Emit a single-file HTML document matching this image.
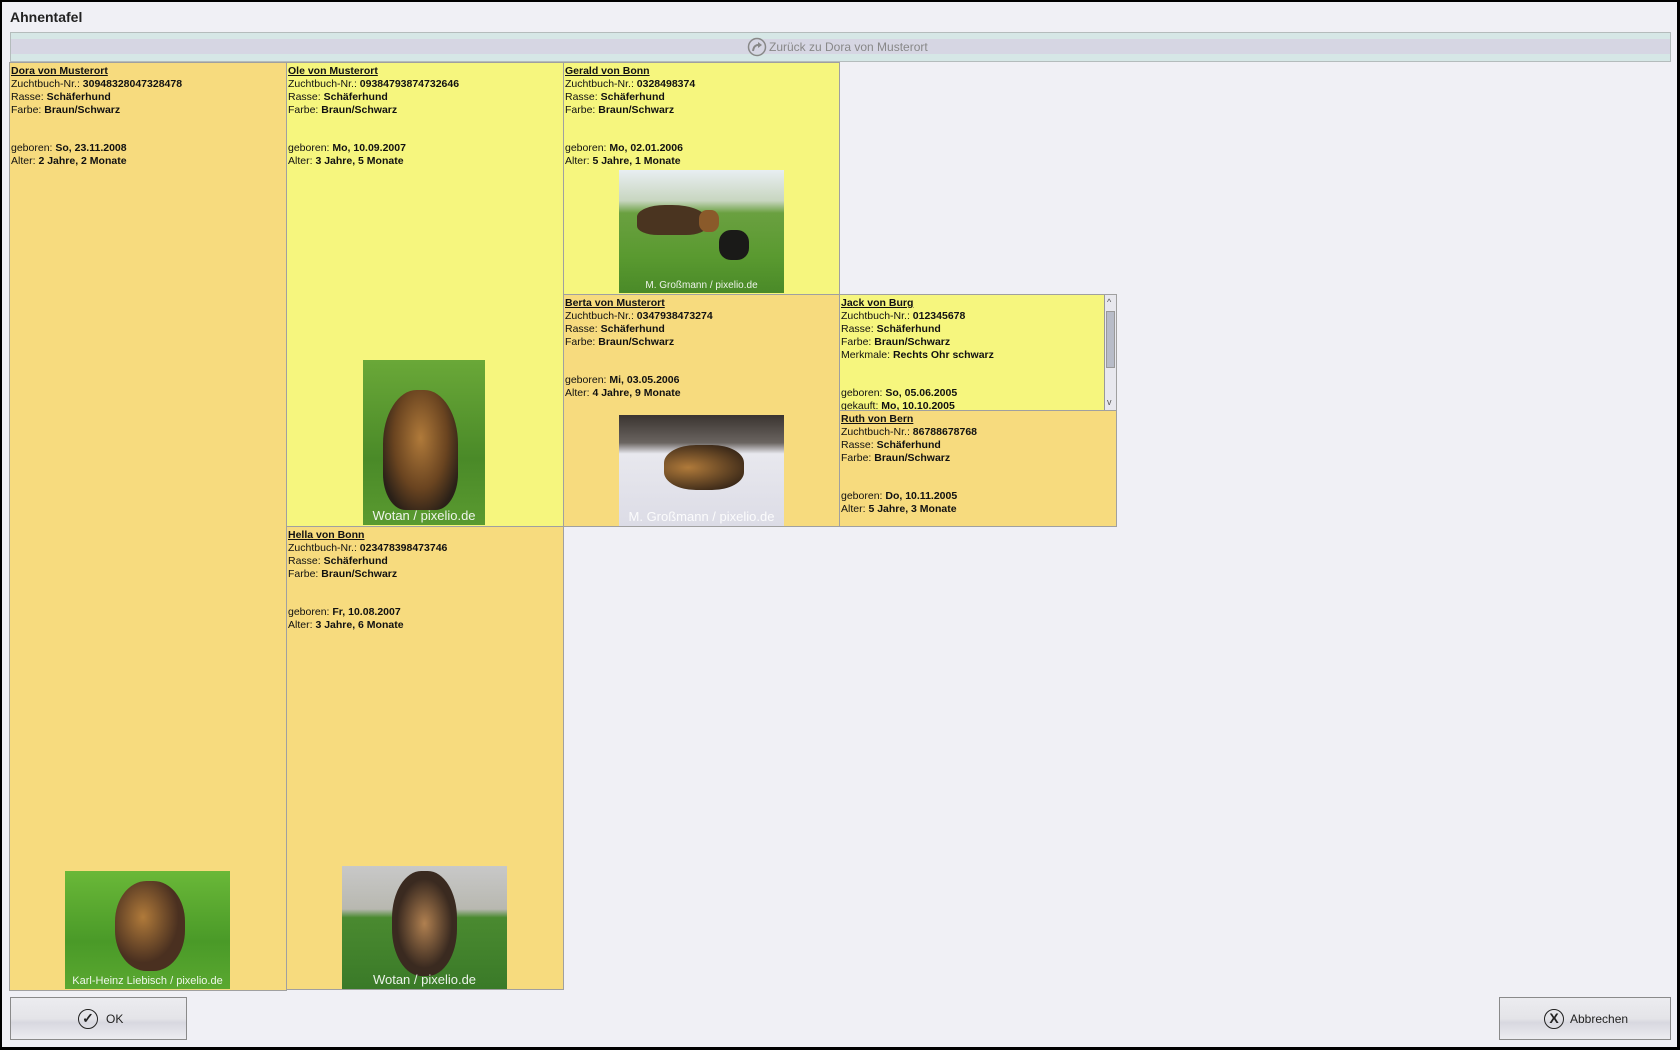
<!DOCTYPE html>
<html><head><meta charset="utf-8"><style>
*{margin:0;padding:0;box-sizing:border-box}
body{width:1680px;height:1050px;background:#f0f0f5;font-family:"Liberation Sans",sans-serif;position:relative;overflow:hidden}
.frame{position:absolute;left:0;top:0;width:1680px;height:1050px;border:2px solid #000;border-right-width:3px;border-bottom-width:3px}
.title{position:absolute;left:10px;top:9px;font-size:14px;font-weight:bold;color:#222}
.bar{position:absolute;left:10px;top:32px;width:1661px;height:30px;border:1px solid #b4bcbc;background:linear-gradient(#d6e7e6 0,#d6e7e6 6px,#d6d6e3 6px,#d6d6e3 21px,#d6e7e6 21px);}
.bar span{position:absolute;left:758px;top:7px;font-size:12px;color:#888;}
.box{position:absolute;border:1px solid #a0a0a0;font-size:10.5px;line-height:12.9px;padding:2px 1px 1px;color:#111;overflow:hidden}
.o{background:#f7db7e}.y{background:#f6f67e}
.box b{font-weight:bold}
.n{font-weight:bold;text-decoration:underline}
.img{position:absolute;overflow:hidden}
.img .cap{position:absolute;left:0;right:0;bottom:2px;text-align:center;color:#fff;font-size:11px;opacity:.9}
.btn{position:absolute;top:997px;height:43px;border:1px solid #8a8a8a;background:linear-gradient(#ececf0 0,#e4e4e8 50%,#d8d8e0 60%,#ececf0);font-size:12px;color:#222}
.ic{position:absolute;width:20px;height:20px;border:1.5px solid #222;border-radius:50%;text-align:center;font-weight:bold;line-height:17px;font-size:14px}
</style></head><body>
<div class="frame"></div>
<div class="title">Ahnentafel</div>
<div class="bar"><svg style="position:absolute;left:736px;top:4px" width="20" height="20"><circle cx="10" cy="10" r="8.5" fill="none" stroke="#888" stroke-width="1.5"/><path d="M6 14 Q7 7 13 8" fill="none" stroke="#888" stroke-width="2"/><path d="M11 5 L15 8 L11 11Z" fill="#888"/></svg><span>Zurück zu Dora von Musterort</span></div>

<div class="box o" style="left:9px;top:62px;width:278px;height:929px"><div class="n">Dora von Musterort</div>Zuchtbuch-Nr.: <b>30948328047328478</b><br>Rasse: <b>Schäferhund</b><br>Farbe: <b>Braun/Schwarz</b><br><br><br>geboren: <b>So, 23.11.2008</b><br>Alter: <b>2 Jahre, 2 Monate</b></div>
<div class="box y" style="left:286px;top:62px;width:278px;height:465px"><div class="n">Ole von Musterort</div>Zuchtbuch-Nr.: <b>09384793874732646</b><br>Rasse: <b>Schäferhund</b><br>Farbe: <b>Braun/Schwarz</b><br><br><br>geboren: <b>Mo, 10.09.2007</b><br>Alter: <b>3 Jahre, 5 Monate</b></div>
<div class="box y" style="left:563px;top:62px;width:277px;height:233px"><div class="n">Gerald von Bonn</div>Zuchtbuch-Nr.: <b>0328498374</b><br>Rasse: <b>Schäferhund</b><br>Farbe: <b>Braun/Schwarz</b><br><br><br>geboren: <b>Mo, 02.01.2006</b><br>Alter: <b>5 Jahre, 1 Monate</b></div>
<div class="box o" style="left:563px;top:294px;width:277px;height:233px"><div class="n">Berta von Musterort</div>Zuchtbuch-Nr.: <b>0347938473274</b><br>Rasse: <b>Schäferhund</b><br>Farbe: <b>Braun/Schwarz</b><br><br><br>geboren: <b>Mi, 03.05.2006</b><br>Alter: <b>4 Jahre, 9 Monate</b></div>
<div class="box y" style="left:839px;top:294px;width:278px;height:117px;padding-right:14px"><div class="n">Jack von Burg</div>Zuchtbuch-Nr.: <b>012345678</b><br>Rasse: <b>Schäferhund</b><br>Farbe: <b>Braun/Schwarz</b><br>Merkmale: <b>Rechts Ohr schwarz</b><br><br><br>geboren: <b>So, 05.06.2005</b><br>gekauft: <b>Mo, 10.10.2005</b>
<div style="position:absolute;right:0;top:0;width:12px;height:115px;background:#e8e8ee;border-left:1px solid #999"><div style="position:absolute;left:1px;top:16px;width:9px;height:57px;background:#b8bcc8;border:1px solid #999"></div><div style="position:absolute;top:1px;left:2px;font-size:9px;color:#555">^</div><div style="position:absolute;bottom:1px;left:2px;font-size:9px;color:#555">v</div></div></div>
<div class="box o" style="left:839px;top:410px;width:278px;height:117px"><div class="n">Ruth von Bern</div>Zuchtbuch-Nr.: <b>86788678768</b><br>Rasse: <b>Schäferhund</b><br>Farbe: <b>Braun/Schwarz</b><br><br><br>geboren: <b>Do, 10.11.2005</b><br>Alter: <b>5 Jahre, 3 Monate</b></div>
<div class="box o" style="left:286px;top:526px;width:278px;height:464px"><div class="n">Hella von Bonn</div>Zuchtbuch-Nr.: <b>023478398473746</b><br>Rasse: <b>Schäferhund</b><br>Farbe: <b>Braun/Schwarz</b><br><br><br>geboren: <b>Fr, 10.08.2007</b><br>Alter: <b>3 Jahre, 6 Monate</b></div>

<div class="img" style="left:619px;top:170px;width:165px;height:123px;background:linear-gradient(#e8eef2 0,#c8d6c0 25%,#6aa040 35%,#5a9a30 70%,#4a8a28)"><div style="position:absolute;left:18px;top:35px;width:70px;height:30px;background:#4a3420;border-radius:40% 50% 30% 30%"></div><div style="position:absolute;left:80px;top:40px;width:20px;height:22px;background:#8a5a2a;border-radius:40%"></div><div style="position:absolute;left:100px;top:60px;width:30px;height:30px;background:#1a1a18;border-radius:40%"></div><div class="cap" style="font-size:10px">M. Großmann / pixelio.de</div></div>
<div class="img" style="left:363px;top:360px;width:122px;height:165px;background:linear-gradient(#6aa838,#4a8a28 60%,#5a9a30)"><div style="position:absolute;left:20px;top:30px;width:75px;height:120px;background:radial-gradient(ellipse at 50% 40%,#b07a3a 0,#6a4420 50%,#2a2018 80%);border-radius:45% 45% 30% 30%"></div><div class="cap" style="font-size:13px">Wotan / pixelio.de</div></div>
<div class="img" style="left:619px;top:415px;width:165px;height:111px;background:linear-gradient(#3a3430 0,#6a6460 25%,#e8e8ee 35%,#dcdce6 100%)"><div style="position:absolute;left:45px;top:30px;width:80px;height:45px;background:radial-gradient(ellipse at 30% 50%,#b07a3a,#3a2818 80%);border-radius:40%"></div><div class="cap" style="font-size:13px">M. Großmann / pixelio.de</div></div>
<div class="img" style="left:65px;top:871px;width:165px;height:118px;background:linear-gradient(#6ab838,#4a9a28 60%,#5aa830)"><div style="position:absolute;left:50px;top:10px;width:70px;height:90px;background:radial-gradient(ellipse at 40% 40%,#b07a3a 0,#4a3020 60%);border-radius:45%"></div><div class="cap" style="font-size:11px">Karl-Heinz Liebisch / pixelio.de</div></div>
<div class="img" style="left:342px;top:866px;width:165px;height:123px;background:linear-gradient(#c8c8c8 0,#b8b8b0 35%,#4a8a30 42%,#3a7a28)"><div style="position:absolute;left:50px;top:5px;width:65px;height:105px;background:radial-gradient(ellipse at 50% 50%,#b08050 0,#3a2a20 60%);border-radius:45%"></div><div class="cap" style="font-size:13px">Wotan / pixelio.de</div></div>

<div class="btn" style="left:10px;width:177px"><div class="ic" style="left:67px;top:11px">✓</div><span style="position:absolute;left:95px;top:14px">OK</span></div>
<div class="btn" style="left:1499px;width:172px"><div class="ic" style="left:44px;top:11px">X</div><span style="position:absolute;left:70px;top:14px">Abbrechen</span></div>
</body></html>
